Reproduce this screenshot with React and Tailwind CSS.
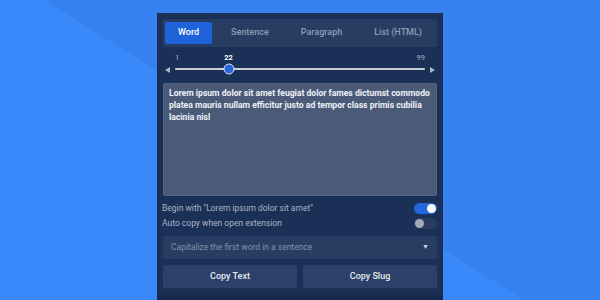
import React, { useState } from 'react';

const tabs = ['Word', 'Sentence', 'Paragraph', 'List (HTML)'];

const Toggle = ({ on }) => (
    <div className={`relative w-[23px] h-[11px] rounded-full ${on ? 'bg-[#2467dc]' : 'bg-[#2a3c5c]'}`}>
        <div
            className={`absolute top-[1px] w-[9px] h-[9px] rounded-full ${on ? 'right-[1px] bg-white' : 'left-[1px] bg-[#a3abb8]'}`}
        />
    </div>
);

const App = () => {
    const [tab, setTab] = useState('Word');
    const count = 22;
    const pct = ((count - 1) / 98) * 100;

    return (
        <div
            className="w-[600px] h-[300px] overflow-hidden flex justify-center pt-[13px] bg-[linear-gradient(32deg,#3a89fb_48.5%,#3780f0_48.5%)]"
            style={{ fontFamily: 'Roboto, "Liberation Sans", sans-serif' }}
        >
            <div className="w-[286px] h-[287px] bg-[#1b3056] flex flex-col px-[6px] pt-[6px]">
                {/* Onglets */}
                <div className="h-[28px] bg-[#283d62] rounded-[2px] flex items-center justify-between px-[2px]">
                    {tabs.map((t) => (
                        <button
                            key={t}
                            onClick={() => setTab(t)}
                            className={`h-[22px] px-[13px] rounded-[2px] text-[9px] font-medium ${
                                tab === t ? 'bg-[#1f63da] text-white' : 'text-[#8e9cb4]'
                            }`}
                        >
                            {t}
                        </button>
                    ))}
                </div>

                {/* Curseur */}
                <div className="h-[36px] flex items-end pb-[13px] gap-[5px] px-[2px]">
                    <span className="w-0 h-0 border-y-[3.5px] border-y-transparent border-r-[5px] border-r-[#aeb7c6] mb-[-2.5px]" />
                    <div className="relative flex-1 h-[2px] bg-[#c9ced7] rounded-full">
                        <span className="absolute left-0 -top-[16px] text-[7.5px] text-[#a8b2c4]">1</span>
                        <span className="absolute right-0 -top-[16px] text-[7.5px] text-[#a8b2c4]">99</span>
                        <span
                            className="absolute -top-[16px] -translate-x-1/2 text-[7.5px] font-bold text-white"
                            style={{ left: `${pct}%` }}
                        >
                            {count}
                        </span>
                        <span
                            className="absolute top-1/2 w-[11px] h-[11px] -translate-x-1/2 -translate-y-1/2 rounded-full bg-[#2467dc] border-[1.5px] border-[#dfe5ef]"
                            style={{ left: `${pct}%` }}
                        />
                    </div>
                    <span className="w-0 h-0 border-y-[3.5px] border-y-transparent border-l-[5px] border-l-[#aeb7c6] mb-[-2.5px]" />
                </div>

                {/* Texte généré */}
                <div className="h-[113px] bg-[#4a5a78] rounded-[2px] border border-[#55657f] px-[5px] pt-[3px] text-[8.6px] leading-[12px] font-bold text-[#eef1f6]">
                    Lorem ipsum dolor sit amet feugiat dolor fames dictumst commodo platea mauris nullam efficitur justo ad tempor class primis cubilia lacinia nisl
                </div>

                {/* Options */}
                <div className="mt-[6px] flex items-center justify-between -ml-[1px] h-[12px]">
                    <span className="text-[8.5px] text-[#a9b3c6]">Begin with "Lorem ipsum dolor sit amet"</span>
                    <Toggle on />
                </div>
                <div className="mt-[3px] flex items-center justify-between -ml-[1px] h-[12px]">
                    <span className="text-[8.5px] text-[#a9b3c6]">Auto copy when open extension</span>
                    <Toggle />
                </div>

                <div className="mt-[7px] h-[23px] bg-[#293d62] rounded-[2px] flex items-center justify-between px-[8px]">
                    <span className="text-[8.5px] text-[#8392ab]">Capitalize the first word in a sentence</span>
                    <span className="text-[7px] text-[#cdd3de]">▼</span>
                </div>

                <div className="mt-[6px] flex gap-[6px]">
                    <button className="flex-1 h-[23px] bg-[#2c4167] rounded-[2px] text-[9px] font-medium text-[#e6eaf1]">
                        Copy Text
                    </button>
                    <button className="flex-1 h-[23px] bg-[#2c4167] rounded-[2px] text-[9px] font-medium text-[#e6eaf1]">
                        Copy Slug
                    </button>
                </div>

                <div className="mt-[3px] flex-1 -mx-[6px] bg-gradient-to-b from-[#1b3056] to-[#142646]" />
            </div>
        </div>
    );
};

export default App;
